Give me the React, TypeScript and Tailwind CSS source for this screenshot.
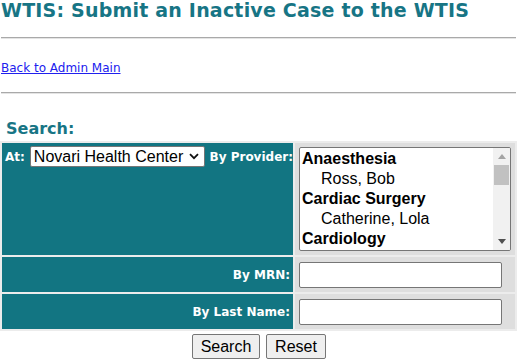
import React from "react";

const verdana = { fontFamily: '"DejaVu Sans", Verdana, sans-serif' };
const arial = { fontFamily: '"Liberation Sans", Arial, sans-serif' };

function Option({ label, group }: { label: string; group?: boolean }) {
  return (
    <div
      className={`h-[20px] leading-[20px] text-[16px] text-black whitespace-nowrap ${group ? "font-bold pl-[2px]" : "pl-[21px]"}`}
      style={arial}
    >
      {label}
    </div>
  );
}

export default function App() {
  return (
    <div className="w-[517px] h-[360px] bg-white overflow-hidden">
      <h1 className="text-[19px] leading-[20px] font-bold text-[#177585] pl-[1px] tracking-[0.2px]" style={verdana}>
        WTIS: Submit an Inactive Case to the WTIS
      </h1>
      <div className="mt-[17px] h-[2px] border-t border-t-[#a9a9a9] border-b border-b-[#e4e4e4] mx-[1px]" />
      <div className="mt-[20px] pl-[1px] leading-[14px]">
        <a href="#" className="text-[12px] text-[#2020ee] underline" style={verdana}>
          Back to Admin Main
        </a>
      </div>
      <div className="mt-[17px] h-[2px] border-t border-t-[#a9a9a9] border-b border-b-[#e4e4e4] mx-[1px]" />
      <div className="mt-[26px] pl-[6px] text-[16px] leading-[18px] font-bold text-[#177585]" style={verdana}>
        Search:
      </div>
      <div className="mt-[3px] grid grid-cols-[291px_1fr] gap-[2px] p-[2px] bg-[#ececec]">
        <div className="bg-[#127582] h-[112px] pl-[3px] pt-[3px] flex items-start gap-[5px]">
          <div className="h-[21px] flex items-center text-[12px] font-bold text-white" style={verdana}>
            At:
          </div>
          <div className="w-[175px] h-[21px] bg-white border border-[#767676] rounded-[2px] flex items-center justify-between pl-[3px] pr-[5px]">
            <span className="text-[16px] leading-[18px] text-black whitespace-nowrap" style={arial}>
              Novari Health Center
            </span>
            <svg width="10" height="7" viewBox="0 0 10 7">
              <path d="M1 1.2 L5 5.2 L9 1.2" fill="none" stroke="#111" strokeWidth="1.8" />
            </svg>
          </div>
          <div className="h-[21px] flex items-center text-[12px] font-bold text-white whitespace-nowrap" style={verdana}>
            By Provider:
          </div>
        </div>
        <div className="bg-[#dedede] h-[112px] pl-[4px] pt-[4px]">
          <div className="w-[212px] h-[104px] bg-white border border-[#767676] rounded-[2px] flex overflow-hidden">
            <div className="flex-1 pt-[1px] overflow-hidden">
              <Option label="Anaesthesia" group />
              <Option label="Ross, Bob" />
              <Option label="Cardiac Surgery" group />
              <Option label="Catherine, Lola" />
              <Option label="Cardiology" group />
            </div>
            <div className="w-[17px] h-full bg-[#f1f1f1] flex flex-col items-center">
              <div className="h-[17px] flex items-center justify-center">
                <svg width="8" height="5" viewBox="0 0 8 5">
                  <path d="M0 5 L4 0 L8 5 Z" fill="#a3a3a3" />
                </svg>
              </div>
              <div className="w-[15px] h-[20px] bg-[#c1c1c1]" />
              <div className="flex-1" />
              <div className="h-[17px] flex items-center justify-center">
                <svg width="8" height="5" viewBox="0 0 8 5">
                  <path d="M0 0 L8 0 L4 5 Z" fill="#505050" />
                </svg>
              </div>
            </div>
          </div>
        </div>
        <div className="bg-[#127582] h-[35px] pr-[3px] flex items-center justify-end text-[12px] font-bold text-white" style={verdana}>
          By MRN:
        </div>
        <div className="bg-[#dedede] h-[35px] pl-[4px] flex items-center">
          <div className="w-[203px] h-[26px] bg-white border border-[#767676] rounded-[2px]" />
        </div>
        <div className="bg-[#127582] h-[35px] pr-[3px] flex items-center justify-end text-[12px] font-bold text-white" style={verdana}>
          By Last Name:
        </div>
        <div className="bg-[#dedede] h-[35px] pl-[4px] flex items-center">
          <div className="w-[203px] h-[26px] bg-white border border-[#767676] rounded-[2px]" />
        </div>
      </div>
      <div className="mt-[3px] flex justify-center gap-[6px] pl-[1px]">
        <div className="w-[68px] h-[25px] bg-[#efefef] border border-[#767676] rounded-[2px] flex items-center justify-center text-[16px] text-black" style={arial}>
          Search
        </div>
        <div className="w-[60px] h-[25px] bg-[#efefef] border border-[#767676] rounded-[2px] flex items-center justify-center text-[16px] text-black" style={arial}>
          Reset
        </div>
      </div>
    </div>
  );
}
